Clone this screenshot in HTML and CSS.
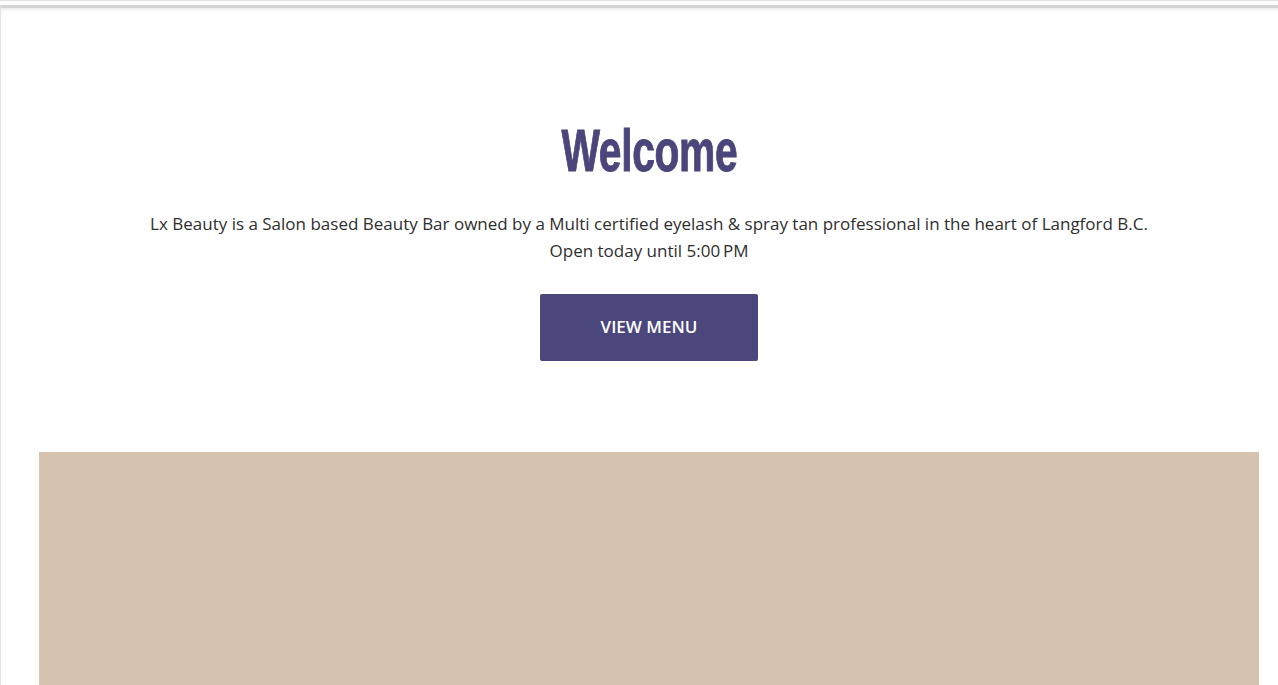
FILE: index.html
```html
<!DOCTYPE html>
<html lang="en">
<head>
<meta charset="utf-8">
<title>Lx Beauty</title>
<link rel="stylesheet" href="styles.css">
</head>
<body>
<div class="topbar"></div>
<div class="page">
  <section class="welcome">
    <h1 class="title"><span class="title-text">Welcome</span></h1>
    <p class="intro">Lx Beauty is a Salon based Beauty Bar owned by a Multi certified eyelash &amp; spray tan professional in the heart of Langford B.C.</p>
    <p class="hours">Open today until 5:00&#8201;PM</p>
    <a class="btn" href="#">VIEW MENU</a>
  </section>
  <div class="banner"></div>
</div>
</body>
</html>
```

FILE: styles.css
```css
html, body {
  margin: 0;
  padding: 0;
  background: #ffffff;
  height: 100%;
  overflow: hidden;
}
body {
  font-family: "Open Sans", "Liberation Sans", sans-serif;
  color: #333333;
}
.topbar {
  height: 4px;
  border-top: 1px solid #e0e0e0;
  background: #ffffff;
}
.page {
  border-top: 3px solid #d4d4d4;
  border-left: 1px solid #e2e2e2;
  box-shadow: inset 0 3px 3px -1px rgba(0,0,0,0.08);
  height: 100%;
  padding: 0 19px 0 38px;
}
.welcome {
  display: flex;
  flex-direction: column;
  align-items: center;
  padding-top: 107px;
  padding-bottom: 91px;
}
.title {
  margin: 0;
  height: 71px;
  line-height: 71px;
  font-family: "Liberation Sans Narrow", "Liberation Sans", sans-serif;
  font-weight: 700;
  font-size: 60px;
  color: #4a467c;
}
.title-text {
  display: inline-block;
  transform: scaleX(0.68);
  letter-spacing: -0.5px;
  -webkit-text-stroke: 1px #4a467c;
}
.intro, .hours {
  margin: 0;
  font-size: 17px;
  line-height: 27px;
  text-align: center;
  color: #2e2e2e;
}
.intro { margin-top: 24px; }
.btn {
  margin-top: 30px;
  display: flex;
  align-items: center;
  justify-content: center;
  width: 218px;
  height: 67px;
  padding-bottom: 2px;
  box-sizing: border-box;
  background: #4b477c;
  border-radius: 2px;
  color: #ffffff;
  text-decoration: none;
  font-size: 17px;
  font-weight: 600;
}
.banner {
  height: 240px;
  background: #d6c3af;
}
```
